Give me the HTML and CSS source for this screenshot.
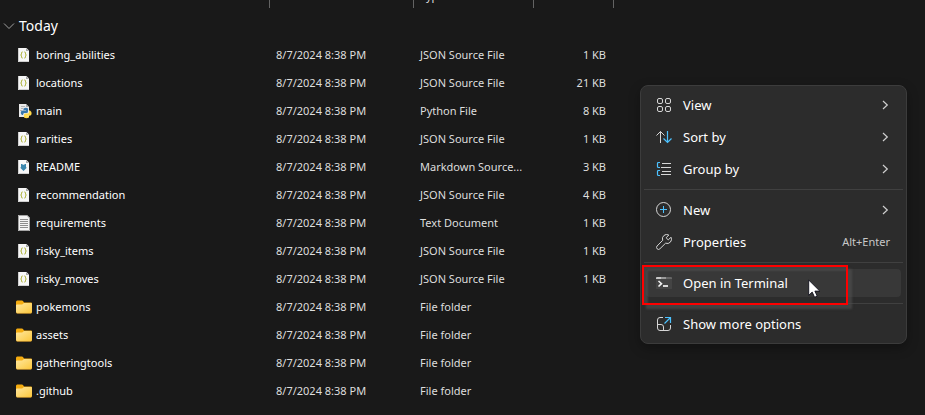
FILE: index.html
```html
<!DOCTYPE html>
<html lang="en">
<head>
<meta charset="utf-8">
<title>Files</title>
<link rel="stylesheet" href="styles.css">
</head>
<body>
<svg class="defs" aria-hidden="true">
  <defs>
    <linearGradient id="folder-face" x1="0" y1="0" x2="1" y2="1">
      <stop offset="0" stop-color="#ffe8a0"/>
      <stop offset="1" stop-color="#fcc73c"/>
    </linearGradient>
    <symbol id="page" viewBox="0 0 16 16">
      <path d="M2 1h8.500l2.500 2.500V15H2z" fill="#f7f7f7"/>
      <path d="M2.500 1v13.500H13" fill="none" stroke="#cfcfcf"/>
      <path d="M10 1v3h3z" fill="#a8a8a8"/>
    </symbol>
    <symbol id="json" viewBox="0 0 16 16">
      <use href="#page"/>
      <path d="M6.800 5h-.8q-.5 0-.5 1v1.500l-1 .5 1 .5V10q0 1 .5 1h.8M8.200 5H9q.5 0 .5 1v1.500l1 .5-1 .5V10q0 1-.5 1h-.8" fill="none" stroke="#b4b84a"/>
    </symbol>
    <symbol id="markdown" viewBox="0 0 16 16">
      <use href="#page"/>
      <path d="M5 5h1l1 .8h1L9 5h1v3.500h1L7.500 12 4 8.500h1z" fill="#3c87ad"/>
    </symbol>
    <symbol id="text" viewBox="0 0 16 16">
      <path d="M2 0h9l3 3v13H2z" fill="#f4f4f4"/>
      <path d="M2.500 .5h8.500l2.500 2.500v12.500h-11z" fill="none" stroke="#a5a5a5"/>
      <path d="M4 4.500h8M4 6.500h8M4 8.500h8M4 10.500h8M4 12.500h8" stroke="#8d8d8d"/>
    </symbol>
    <symbol id="python" viewBox="0 0 16 16">
      <path d="M3 1h7l3 3v10H3z" fill="#e9e9e9"/>
      <path d="M5 3.500h4M5 5.500h2M4 7.500h2" stroke="#b5b5b5"/>
      <path d="M10 1v3h3z" fill="#a8a8a8"/>
      <path d="M7.500 5.500Q10 4.200 12 5.500v3Q12 10 10.500 10H8.500Q7 10 7 12H6Q4.500 11 4.800 9 5 7.500 7 7.500h3V7H7.500z" fill="#3776ab"/>
      <path d="M13 7.500h1Q16 8.500 15.600 11 15.300 12.700 13.500 12.700h-3v.5h2.500v1.300Q10.500 16 8 14.500V12Q8 10.500 9.500 10.500h2Q13 10.500 13 9z" fill="#ffd94a"/>
    </symbol>
    <symbol id="folder" viewBox="0 0 16 16">
      <path d="M0 3Q0 1.500 1.200 1.500H6q.6 0 1 .5l1 1.500h7q1 0 1 1V8H0z" fill="#f5ac10"/>
      <path d="M0 6.200Q0 5.500 1 5.500h5.200L8 4h7q1 0 1 1v8q0 1.200-1.200 1.200H1.200Q0 14.200 0 13z" fill="url(#folder-face)"/>
      <path d="M.3 13.500q.3.900 1 .9h13.400q.7 0 1-.9" fill="none" stroke="#e5a52c" stroke-width=".6"/>
    </symbol>
    <symbol id="chevron" viewBox="0 0 16 16">
      <path d="M6 4l4.300 4L6 12" fill="none" stroke="#d0d0d0" stroke-width="1.200"/>
    </symbol>
  </defs>
</svg>

<main class="explorer">
  <table class="files">
    <colgroup>
      <col class="col-name"><col class="col-date"><col class="col-type"><col class="col-size">
    </colgroup>
    <thead>
      <tr><th><span class="label"></span></th><th><span class="label"></span></th><th><span class="label">Type</span></th><th><span class="label"></span></th></tr>
    </thead>
    <tbody>
      <tr>
        <th class="group" colspan="4" scope="rowgroup">
          <button class="group-toggle" type="button">
            <svg class="group-arrow" viewBox="0 0 12 12" aria-hidden="true"><path d="M1 3.500l5 5 5-5" fill="none" stroke="#a0a0a0"/></svg>
            Today
          </button>
        </th>
      </tr>
      <tr><td><div class="file"><svg class="icon"><use href="#json"/></svg>boring_abilities</div></td><td>8/7/2024 8:38 PM</td><td>JSON Source File</td><td>1 KB</td></tr>
      <tr><td><div class="file"><svg class="icon"><use href="#json"/></svg>locations</div></td><td>8/7/2024 8:38 PM</td><td>JSON Source File</td><td>21 KB</td></tr>
      <tr><td><div class="file"><svg class="icon"><use href="#python"/></svg>main</div></td><td>8/7/2024 8:38 PM</td><td>Python File</td><td>8 KB</td></tr>
      <tr><td><div class="file"><svg class="icon"><use href="#json"/></svg>rarities</div></td><td>8/7/2024 8:38 PM</td><td>JSON Source File</td><td>1 KB</td></tr>
      <tr><td><div class="file"><svg class="icon"><use href="#markdown"/></svg>README</div></td><td>8/7/2024 8:38 PM</td><td>Markdown Source...</td><td>3 KB</td></tr>
      <tr><td><div class="file"><svg class="icon"><use href="#json"/></svg>recommendation</div></td><td>8/7/2024 8:38 PM</td><td>JSON Source File</td><td>4 KB</td></tr>
      <tr><td><div class="file"><svg class="icon"><use href="#text"/></svg>requirements</div></td><td>8/7/2024 8:38 PM</td><td>Text Document</td><td>1 KB</td></tr>
      <tr><td><div class="file"><svg class="icon"><use href="#json"/></svg>risky_items</div></td><td>8/7/2024 8:38 PM</td><td>JSON Source File</td><td>1 KB</td></tr>
      <tr><td><div class="file"><svg class="icon"><use href="#json"/></svg>risky_moves</div></td><td>8/7/2024 8:38 PM</td><td>JSON Source File</td><td>1 KB</td></tr>
      <tr><td><div class="file"><svg class="icon"><use href="#folder"/></svg>pokemons</div></td><td>8/7/2024 8:38 PM</td><td>File folder</td><td></td></tr>
      <tr><td><div class="file"><svg class="icon"><use href="#folder"/></svg>assets</div></td><td>8/7/2024 8:38 PM</td><td>File folder</td><td></td></tr>
      <tr><td><div class="file"><svg class="icon"><use href="#folder"/></svg>gatheringtools</div></td><td>8/7/2024 8:38 PM</td><td>File folder</td><td></td></tr>
      <tr><td><div class="file"><svg class="icon"><use href="#folder"/></svg>.github</div></td><td>8/7/2024 8:38 PM</td><td>File folder</td><td></td></tr>
    </tbody>
  </table>
</main>

<div class="menu" role="menu">
  <button class="item" type="button" role="menuitem">
    <svg class="icon" viewBox="0 0 16 16"><g fill="none" stroke="#d6d6d6"><rect x="1.500" y="1.500" width="5" height="5" rx="1.500"/><rect x="9.500" y="1.500" width="5" height="5" rx="1.500"/><rect x="1.500" y="9.500" width="5" height="5" rx="1.500"/><rect x="9.500" y="9.500" width="5" height="5" rx="1.500"/></g></svg>
    <span class="name">View</span><svg class="icon"><use href="#chevron"/></svg>
  </button>
  <button class="item" type="button" role="menuitem">
    <svg class="icon" viewBox="0 0 16 16"><path d="M4.500 14V2.500M.5 6.500l4-4 4 4" fill="none" stroke="#d6d6d6"/><path d="M11.500 2v11.500M7.500 9.500l4 4 4-4" fill="none" stroke="#4cc2ff" stroke-width="1.200"/></svg>
    <span class="name">Sort by</span><svg class="icon"><use href="#chevron"/></svg>
  </button>
  <button class="item" type="button" role="menuitem">
    <svg class="icon" viewBox="0 0 16 16"><path d="M4 1.500H2.500q-1 0-1 1v3q0 1 1 1H4M4 9.500H2.500q-1 0-1 1v3q0 1 1 1H4" fill="none" stroke="#4cc2ff" stroke-width="1.200"/><path d="M6 2.500h9M5 6.500h10M6 10.500h9M5 13.500h10" fill="none" stroke="#d6d6d6"/></svg>
    <span class="name">Group by</span><svg class="icon"><use href="#chevron"/></svg>
  </button>
  <hr class="rule">
  <button class="item" type="button" role="menuitem">
    <svg class="icon" viewBox="0 0 16 16"><circle cx="7.500" cy="7.500" r="7" fill="none" stroke="#d6d6d6"/><path d="M7.500 4v7M4 7.500h7" stroke="#4cc2ff"/></svg>
    <span class="name">New</span><svg class="icon"><use href="#chevron"/></svg>
  </button>
  <button class="item" type="button" role="menuitem">
    <svg class="icon" viewBox="0 0 16 16"><path d="M12.800 1A4.300 4.300 0 0 0 6.700 6.300L1.100 12a1.900 1.900 0 0 0 2.800 2.800l5.700-5.600A4.300 4.300 0 0 0 15 3.200l-2.700 2.700-2.200-2.100z" fill="none" stroke="#d6d6d6" stroke-linejoin="round"/></svg>
    <span class="name">Properties</span><span class="shortcut">Alt+Enter</span>
  </button>
  <hr class="rule">
  <div class="marked">
    <button class="item active" type="button" role="menuitem">
      <svg class="icon" viewBox="0 0 16 16"><path d="M0 4h16v9.500q0 .5-.5.500H.5q-.5 0-.5-.5z" fill="#444"/><path d="M0 4V3q0-1 1-1h4v2z" fill="#c8c8c8"/><path d="M5 2h5v2H5z" fill="#999"/><path d="M10 2h5q1 0 1 1v1h-6z" fill="#666"/><path d="M2.500 6l3 2.700-3 2.800" fill="none" stroke="#f0f0f0" stroke-width="1.600"/><path d="M7 11h5" stroke="#d8d8d8" stroke-width="2"/></svg>
      <span class="name">Open in Terminal</span>
    </button>
    <div class="highlight"></div>
    <svg class="cursor" viewBox="0 0 13 19" aria-hidden="true"><path d="M.7 1v15.300l3.500-3.200 2.400 5.200 2.600-1.200-2.300-5h4.900z" fill="#fff" stroke="#10101c" stroke-width=".9"/></svg>
  </div>
  <hr class="rule">
  <button class="item" type="button" role="menuitem">
    <svg class="icon" viewBox="0 0 16 16"><path d="M7 1.500H4Q1.500 1.500 1.500 4v8q0 2.500 2.500 2.500h8q2.500 0 2.500-2.500V9M1.500 8.500H5q2.500 0 2.500 2.500v3.500" fill="none" stroke="#d6d6d6"/><path d="M9 1.500h5.500V7M14.500 1.500l-6 6" fill="none" stroke="#4cc2ff" stroke-width="1.200"/></svg>
    <span class="name">Show more options</span>
  </button>
</div>
</body>
</html>
```
FILE: styles.css
```css
* {
  box-sizing: border-box;
}

body {
  margin: 0;
  min-height: 100vh;
  background: #191919;
  color: #fff;
  font: 11px/16px "Segoe UI", "Noto Sans", sans-serif;
}

button {
  border: 0;
  background: none;
  color: inherit;
  font: inherit;
  text-align: left;
}

.defs {
  position: absolute;
  width: 0;
  height: 0;
}

.icon {
  flex: none;
  display: block;
  width: 16px;
  height: 16px;
}

.explorer {
  height: 100vh;
  overflow: hidden;
}

/* The column header is scrolled mostly out of view. */
.files {
  margin-top: -19px;
  width: 614px;
  table-layout: fixed;
  border-collapse: collapse;
}

.col-name { width: 270px; }
.col-date { width: 144px; }
.col-type { width: 120px; }
.col-size { width: 80px; }

.files th {
  height: 32px;
  padding: 0;
  font-weight: 400;
  text-align: left;
  vertical-align: top;
}

.label {
  display: block;
  height: 27px;
  padding-left: 6px;
  border-right: 1px solid #636363;
  line-height: 30px;
  color: #dedede;
}

.files td {
  height: 28px;
  padding: 0 8px 0 6px;
  color: #dedede;
  white-space: nowrap;
}

.files td:first-child {
  padding-left: 16px;
  color: #fff;
}

.files td:last-child {
  text-align: right;
}

.file {
  display: flex;
  align-items: center;
  gap: 4px;
}

.files .group {
  height: 28px;
}

.group-toggle {
  display: flex;
  align-items: center;
  gap: 4px;
  height: 26px;
  padding: 0 3px;
  font-size: 14px;
}

.group-arrow {
  width: 12px;
  height: 12px;
}

.menu {
  position: absolute;
  top: 85px;
  left: 640px;
  display: flex;
  flex-direction: column;
  width: 267px;
  padding: 3px;
  border: 1px solid #3c3c3c;
  border-radius: 8px;
  background: #2c2c2c;
  box-shadow: 0 4px 12px rgba(0, 0, 0, 0.3);
}

.item {
  display: flex;
  align-items: center;
  gap: 11px;
  height: 28px;
  margin: 2px;
  padding: 0 8px 0 10px;
  border-radius: 4px;
  font-size: 13px;
}

.item.active {
  background: #383838;
}

.name {
  flex: 1;
}

.shortcut {
  padding-right: 3px;
  color: #c8c8c8;
  font-size: 11px;
}

.rule {
  width: 100%;
  height: 1px;
  margin: 4px 0;
  border: 0;
  background: #404040;
}

.marked {
  position: relative;
  display: flex;
  flex-direction: column;
}

.highlight {
  position: absolute;
  top: -2px;
  left: -2px;
  width: 206px;
  height: 40px;
  border: 2px solid #f00;
  box-shadow: 4px 4px 2px #505050a0, inset 4px 4px 2px #505050a0;
}

.cursor {
  position: absolute;
  top: 12px;
  left: 164px;
  width: 13px;
  height: 19px;
}
```
